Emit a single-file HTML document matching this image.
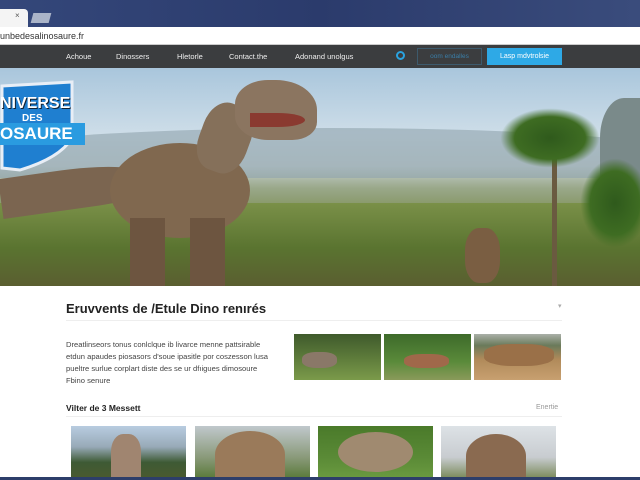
<!DOCTYPE html>
<html><head><meta charset="utf-8"><style>
*{margin:0;padding:0;box-sizing:border-box}
body{width:640px;height:480px;overflow:hidden;background:#fff;font-family:"Liberation Sans",sans-serif;position:relative}
.a{position:absolute}
</style></head><body>
<div class="a" style="left:0;top:0;width:640px;height:27px;background:linear-gradient(90deg,#34477a,#2b3b6c 50%,#3a4c7c)"></div>
<div class="a" style="left:0;top:9px;width:28px;height:18px;background:#f4f4f4;border-radius:0 4px 0 0"></div>
<div class="a" style="left:15px;top:11px;font-size:8px;color:#555">×</div>
<div class="a" style="left:32px;top:13px;width:18px;height:10px;background:#aab4c8;transform:skewX(-15deg)"></div>
<div class="a" style="left:0;top:27px;width:640px;height:18px;background:#fff;border-bottom:1px solid #ccc"></div>
<div class="a" style="left:0;top:31px;font-size:9px;color:#333">unbedesalinosaure.fr</div>
<div class="a" style="left:0;top:45px;width:640px;height:23px;background:#3b3d3f"></div>
<div class="a" style="top:52px;left:66px;font-size:7.5px;color:#eee">Achoue</div>
<div class="a" style="top:52px;left:116px;font-size:7.5px;color:#eee">Dinossers</div>
<div class="a" style="top:52px;left:177px;font-size:7.5px;color:#eee">Hletorle</div>
<div class="a" style="top:52px;left:229px;font-size:7.5px;color:#eee">Contact.the</div>
<div class="a" style="top:52px;left:295px;font-size:7.5px;color:#eee">Adonand unolgus</div>
<div class="a" style="top:51px;left:396px;width:9px;height:9px;border:2px solid #2aa3e0;border-radius:50%"></div>
<div class="a" style="top:48px;left:417px;width:65px;height:17px;border:1px solid #3d5a6c;color:#3a7ea8;font-size:6.5px;text-align:center;line-height:15px">oom endalles</div>
<div class="a" style="top:48px;left:487px;width:75px;height:17px;background:#2ea9e6;color:#fff;font-size:7px;text-align:center;line-height:17px">Lasp mdvtrolsie</div>
<div class="a" style="left:0;top:68px;width:640px;height:218px;overflow:hidden;background:linear-gradient(180deg,#a9c6dc 0%,#cddde8 30%,#c7d2d2 45%,#9aa88a 55%,#7e8f55 68%,#6a7a3c 85%,#5a5a30 100%)">
<div class="a" style="left:-20px;top:60px;width:700px;height:50px;background:#8fa3ad;border-radius:50% 50% 0 0;opacity:.6"></div>
<div class="a" style="left:600px;top:30px;width:60px;height:100px;background:#7a8a8a;border-radius:40% 0 0 0"></div>
<div class="a" style="left:0;top:135px;width:640px;height:90px;background:linear-gradient(180deg,#7a9048,#5a7430 50%,#5a5a30)"></div>
<div class="a" style="left:0;top:100px;width:160px;height:40px;background:#7b6550;border-radius:0 60% 40% 0;transform:rotate(-8deg)"></div>
<div class="a" style="left:110px;top:75px;width:140px;height:95px;background:#80684f;border-radius:50%"></div>
<div class="a" style="left:200px;top:35px;width:50px;height:70px;background:#85705a;border-radius:40%;transform:rotate(20deg)"></div>
<div class="a" style="left:235px;top:12px;width:82px;height:60px;background:#8b7560;border-radius:40% 50% 30% 40%"></div>
<div class="a" style="left:250px;top:45px;width:55px;height:14px;background:#8a3a30;border-radius:0 50% 50% 0"></div>
<div class="a" style="left:130px;top:150px;width:35px;height:68px;background:#6d5540"></div>
<div class="a" style="left:190px;top:150px;width:35px;height:68px;background:#6d5540"></div>
<div class="a" style="left:552px;top:60px;width:5px;height:160px;background:#6a5a40"></div>
<div class="a" style="left:500px;top:40px;width:100px;height:60px;background:radial-gradient(#2f5a1c,#3e6c22 50%,transparent 70%)"></div>
<div class="a" style="left:580px;top:90px;width:70px;height:90px;background:radial-gradient(#2f5a1c,#3e6c22 50%,transparent 70%)"></div>
<div class="a" style="left:465px;top:160px;width:35px;height:55px;background:#7a5e42;border-radius:40%"></div>
<svg class="a" style="left:0;top:10px" width="90" height="95"><path d="M2 8 L72 4 L72 60 Q60 80 20 92 L2 90Z" fill="#1f7fd0" stroke="#e8eef6" stroke-width="3"/></svg>
<div class="a" style="left:0;top:27px;font:bold 16px 'Liberation Sans';color:#fff;text-shadow:1px 1px 0 #123">NIVERSE</div>
<div class="a" style="left:22px;top:45px;font:bold 10px 'Liberation Sans';color:#fff">DES</div>
<div class="a" style="left:0;top:55px;width:85px;height:22px;background:#2a9be0"></div>
<div class="a" style="left:0;top:56px;font:bold 17px 'Liberation Sans';color:#fff">OSAURE</div>
</div>
<div class="a" style="left:66px;top:301px;font:bold 13px 'Liberation Sans';color:#222">Eruvvents de /Etule Dino renırés</div>
<div class="a" style="left:558px;top:302px;font-size:7px;color:#aaa">▾</div>
<div class="a" style="left:66px;top:320px;width:496px;height:1px;background:#eee"></div>
<div class="a" style="left:66px;top:339px;width:230px;white-space:nowrap;font-size:7.6px;line-height:12px;color:#444">Dreatlinseors tonus conlclque ib livarce menne pattsirable<br>etdun apaudes piosasors d'soue ipasitle por coszesson lusa<br>pueltre surlue corplart diste des se ur dfıigues dimosoure<br>Fbino senure</div>
<div class="a" style="left:294px;top:334px;width:87px;height:46px;background:linear-gradient(180deg,#3f5a2c,#5c7a3a 50%,#7b9a4a);"><div class="a" style="left:8px;top:18px;width:35px;height:16px;background:#8a7868;border-radius:40%"></div></div>
<div class="a" style="left:384px;top:334px;width:87px;height:46px;background:linear-gradient(180deg,#3d6a2a,#5a8a3a 60%,#8a9a5a)"><div class="a" style="left:20px;top:20px;width:45px;height:14px;background:#a0684a;border-radius:40%"></div></div>
<div class="a" style="left:474px;top:334px;width:87px;height:46px;background:linear-gradient(180deg,#aab0a8,#6a7a5a 25%,#b08a5a 55%,#c8a070)"><div class="a" style="left:10px;top:10px;width:70px;height:22px;background:#9a7048;border-radius:40%"></div></div>
<div class="a" style="left:66px;top:403px;font:bold 8.5px 'Liberation Sans';color:#222">Vilter de  3 Messett</div>
<div class="a" style="left:536px;top:404px;font-size:7px;color:#999">Enertie</div>
<div class="a" style="left:66px;top:416px;width:496px;height:1px;background:#eee"></div>
<div class="a" style="left:71px;top:426px;width:115px;height:52px;background:linear-gradient(180deg,#b8cce0,#98aab8 40%,#3e5a34 70%,#4a5a30)"><div class="a" style="left:40px;top:8px;width:30px;height:44px;background:#a08570;border-radius:40% 40% 0 0"></div></div>
<div class="a" style="left:195px;top:426px;width:115px;height:52px;background:linear-gradient(180deg,#c0c8cc,#8a9a7a 60%,#5a7a3a)"><div class="a" style="left:20px;top:5px;width:70px;height:47px;background:#9a7a5a;border-radius:50% 50% 0 0"></div></div>
<div class="a" style="left:318px;top:426px;width:115px;height:52px;background:linear-gradient(180deg,#4a7a2a,#5a8a36 60%,#6a9a40)"><div class="a" style="left:20px;top:6px;width:75px;height:40px;background:#a08a70;border-radius:50%"></div></div>
<div class="a" style="left:441px;top:426px;width:115px;height:52px;background:linear-gradient(180deg,#dde2e6,#c8ccd0 60%,#7a8a5a)"><div class="a" style="left:25px;top:8px;width:60px;height:44px;background:#8a6a50;border-radius:50% 50% 0 0"></div></div>
<div class="a" style="left:0;top:477px;width:640px;height:3px;background:#2d3e6a"></div>
</body></html>
